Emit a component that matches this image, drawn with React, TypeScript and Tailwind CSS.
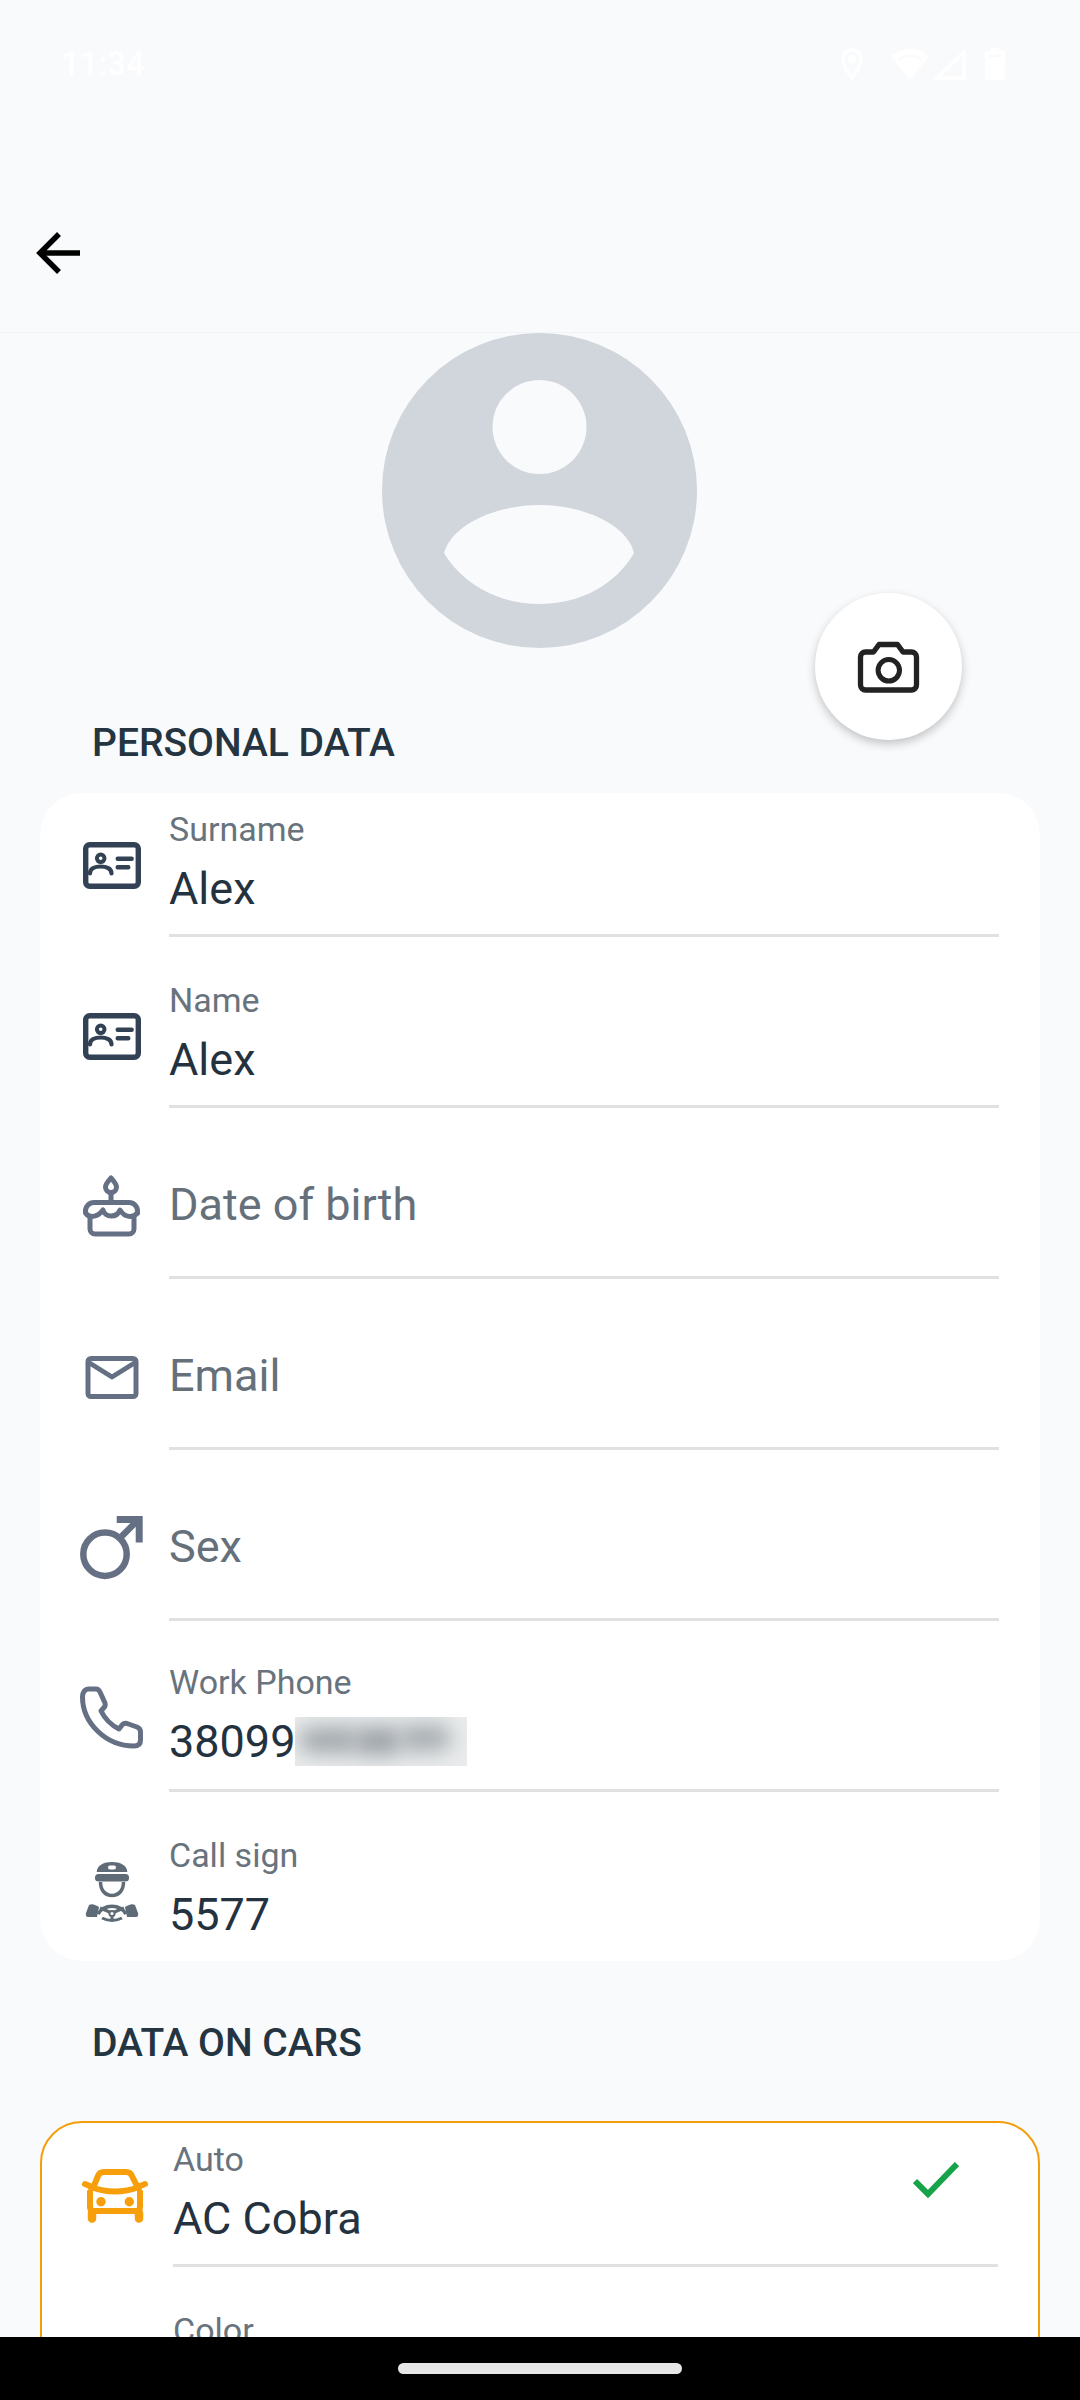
import React from "react";

const Dark = "#334155";
const Muted = "#667085";

function IdCardIcon() {
  return (
    <svg width="80" height="80" viewBox="0 0 80 80" fill="none" stroke={Dark} strokeLinecap="round">
      <g transform="translate(11,17)">
        <rect x="2.7" y="2.7" width="52.6" height="41.6" rx="4" strokeWidth="5.4" />
        <circle cx="17.7" cy="16.3" r="3.8" strokeWidth="4" />
        <path d="M7 31.5 C7 26.5 12 24.5 17.7 24.5 C23.5 24.5 28.5 26.5 28.5 31.5" strokeWidth="4.2" />
        <path d="M34.7 16.7H48.7M34.7 25.3H45.3" strokeWidth="4.4" />
      </g>
    </svg>
  );
}

function CakeIcon() {
  return (
    <svg width="80" height="80" viewBox="0 0 80 80" fill="none" stroke={Muted} strokeWidth="5" strokeLinecap="round" strokeLinejoin="round">
      <path d="M39 11 C42 14.5 44.5 17 44.5 20 A5.5 5.5 0 0 1 33.5 20 C33.5 17 36 14.5 39 11Z" />
      <path d="M39 26V35" />
      <path d="M13.5 44 A8.5 8.5 0 0 1 22 35.5 H57 A8.5 8.5 0 0 1 65.5 44 V46" />
      <path d="M13.5 44 V46 C17 51 25 51 31 43 C33 51 45 51 48 43 C53 51 61 51 65.5 46" />
      <path d="M18 50 V62 A5 5 0 0 0 23 67 H57 A5 5 0 0 0 62 62 V50" />
    </svg>
  );
}

function MailIcon() {
  return (
    <svg width="80" height="80" viewBox="0 0 80 80" fill="none" stroke={Muted} strokeWidth="5" strokeLinejoin="round">
      <rect x="16" y="20.5" width="48" height="38" rx="3" />
      <path d="M16 24 L40 39 L64 24" />
    </svg>
  );
}

function MaleIcon() {
  return (
    <svg width="80" height="80" viewBox="0 0 80 80" fill="none" stroke={Muted} strokeWidth="6.5">
      <circle cx="33" cy="45.2" r="21.7" />
      <path d="M48 29 L66 11" />
      <path d="M44.7 7H70.7V33.5H63.7V14H44.7Z" fill={Muted} stroke="none" />
    </svg>
  );
}

function PhoneIcon() {
  return (
    <svg width="80" height="80" viewBox="0 0 80 80" fill="none" stroke={Muted} strokeWidth="5" strokeLinejoin="round">
      <path d="M10.5 17 C10.5 12 13 9 17 9 H24 C26 9 27 10 28 12 L33 23 C33.5 25 33 26.5 32 27.5 L29 31 C33 39 39 45 47 49 L50 45 C51.5 43.5 53 43 55 43.5 L65 47 C67.5 48 68.5 49.5 68.5 52 V60 C68.5 64 66 66 62 66 C34 66 10.5 43 10.5 17Z" />
    </svg>
  );
}

function DriverIcon() {
  const c = "#5f6b76";
  return (
    <svg width="80" height="80" viewBox="0 0 80 80" fill="none">
      <path d="M24.7 22 C25 15 32 12 40 12 C48 12 55 15 55.3 22Z" fill={c} />
      <rect x="36" y="15.5" width="8" height="4" rx="2" fill="#fff" />
      <rect x="23" y="24" width="34" height="7.5" rx="3.5" fill={c} />
      <path d="M28.5 32 C28.5 40 33 45.5 40 45.5 C47 45.5 51.5 40 51.5 32" stroke={c} strokeWidth="3.5" />
      <path d="M26 64 A16 15 0 0 1 54 64" stroke={c} strokeWidth="3.5" />
      <path d="M28 58 L40 63 L52 58 M40 63V69 M30 68 Q40 73 50 68" stroke={c} strokeWidth="3" />
      <circle cx="40" cy="63.5" r="3.6" fill={c} />
      <circle cx="40" cy="63.5" r="1.6" fill="#fff" />
      <path d="M17 55 C20 53 24 55 27 57 L25 67 H16 C14 67 13.5 65 14 63Z" fill={c} />
      <path d="M63 55 C60 53 56 55 53 57 L55 67 H64 C66 67 66.5 65 66 63Z" fill={c} />
    </svg>
  );
}

function CarIcon() {
  const c = "#f79e0b";
  return (
    <svg width="80" height="80" viewBox="0 0 80 80" fill="none" stroke={c} strokeWidth="6" strokeLinecap="round" strokeLinejoin="round">
      <path d="M17 33 L22 21 C23 18 25 17 28 17 H50 C53 17 55 18 56 21 L62 33" />
      <path d="M15 32 Q39 41 63 32" />
      <path d="M14 37 V52 Q14 56 18 56 H60 Q64 56 64 52 V37" />
      <path d="M9 29 L14 31 M69 29 L64 31" />
      <path d="M16 58V63.5 M63 58V63.5" strokeWidth="8.5" />
      <circle cx="25" cy="46.7" r="4.7" fill={c} stroke="none" />
      <circle cx="53.3" cy="46.7" r="4.7" fill={c} stroke="none" />
    </svg>
  );
}

function BlurBlock() {
  return (
    <div className="relative overflow-hidden w-[172px] h-[49px] mt-[2px] bg-[#e9ebec]">
      <div className="absolute left-[4px] top-[10px] w-[60px] h-[26px] rounded-full bg-[#a2a8ac] blur-[10px]" />
      <div className="absolute left-[58px] top-[10px] w-[50px] h-[28px] rounded-full bg-[#9ca2a7] blur-[10px]" />
      <div className="absolute left-[104px] top-[8px] w-[52px] h-[26px] rounded-full bg-[#a6acb0] blur-[10px]" />
    </div>
  );
}

function Field({
  icon,
  label,
  value,
  placeholder,
  noLine,
  blurred,
  last,
  trailing,
  car,
}: {
  icon: React.ReactNode;
  label?: string;
  value?: string;
  placeholder?: string;
  noLine?: boolean;
  blurred?: boolean;
  last?: boolean;
  trailing?: React.ReactNode;
  car?: boolean;
}) {
  return (
    <div className={`flex items-center ${last ? "h-[142px]" : "h-[144px]"} shrink-0 gap-[17px] ${car ? "pl-[34px] pr-[40px]" : "pl-[32px] pr-[41px]"}`}>
      <div className="w-[80px] h-[80px] shrink-0">{icon}</div>
      <div className={`relative flex-1 h-full ${noLine ? "" : "border-b-[3px] border-[#dfe1e3]"}`}>
        {placeholder ? (
          <div className="pt-[43px] text-[45px] leading-[53px] text-[#65707b]">{placeholder}</div>
        ) : (
          <div className={blurred ? "pt-[14px]" : "pt-[16px]"}>
            <div className="text-[34px] leading-[40px] text-[#68737d]">{label}</div>
            {value !== undefined && (
              <div className="mt-[13px] flex items-start text-[45px] leading-[53px] text-[#243240]">
                <span>{value}</span>
                {blurred && <BlurBlock />}
              </div>
            )}
          </div>
        )}
        {trailing}
      </div>
    </div>
  );
}

export default function App() {
  return (
    <div className="w-[1080px] h-[2400px] flex flex-col overflow-hidden bg-[#f8fafc] [font-family:Roboto,sans-serif]">
      <header className="h-[333px] shrink-0 border-b border-[#f1f3f5]">
        <div className="h-[125px] flex items-start justify-between pl-[61px] pr-[75px] pt-[48px]">
          <span className="text-[33px] leading-[32px] font-medium text-white">11:34</span>
          <div className="flex items-center">
            <svg width="22" height="32" viewBox="0 0 22 32" fill="none" stroke="#fff" strokeWidth="3.5">
              <path d="M11 30 C7 24 2 17 2 11 A9 9 0 0 1 20 11 C20 17 15 24 11 30Z" />
              <circle cx="11" cy="11" r="2.5" fill="#fff" />
            </svg>
            <svg className="ml-[28px]" width="38" height="32" viewBox="0 0 38 32" fill="#fff">
              <path d="M0 9 C10 -2 28 -2 38 9 L19 32Z" />
              <path d="M7 12 C14 6 24 6 31 12" fill="none" stroke="#f8fafc" strokeWidth="2" />
            </svg>
            <svg className="ml-[4px]" width="33" height="32" viewBox="0 0 33 32" fill="none" stroke="#fff" strokeWidth="3.5">
              <path d="M31 4V30H4Z" />
            </svg>
            <svg className="ml-[19px]" width="20" height="32" viewBox="0 0 20 32" fill="#fff">
              <path d="M6 0H14V3H20V32H0V3H6Z" />
              <rect x="3" y="7" width="14" height="2" fill="#f8fafc" />
            </svg>
          </div>
        </div>
        <div className="pl-[35px] pt-[105px]">
          <svg width="46" height="46" viewBox="0 0 46 46" fill="none" stroke="#000" strokeWidth="5.5">
            <path d="M24 4 L5 23 L24 42" />
            <path d="M5 23H45" />
          </svg>
        </div>
      </header>

      <main className="relative flex-1 min-h-0 overflow-hidden">
        <section className="relative">
          <div className="flex justify-center pr-[2px]">
            <svg width="315" height="315" viewBox="0 0 315 315">
              <circle cx="157.5" cy="157.5" r="157.5" fill="#d1d5dc" />
              <circle cx="157.5" cy="94" r="47" fill="#f8fafc" />
              <path d="M62 220 C70 191 115 172 157.5 172 C200 172 245 191 252 220 C235 250 200 271 157.5 271 C115 271 80 250 62 220Z" fill="#f8fafc" />
            </svg>
          </div>
          <h2 className="ml-[92px] mt-[73px] mb-[28px] text-[39px] leading-[44px] font-medium text-[#243441]">PERSONAL DATA</h2>
          <button className="absolute left-[815px] top-[260px] w-[147px] h-[147px] rounded-full bg-white flex items-center justify-center shadow-[0_4px_10px_rgba(0,0,0,0.22)]">
            <svg width="100" height="80" viewBox="-1.5 1 100 80" fill="none" stroke="#222" strokeLinejoin="round">
              <path d="M20 31 A5 5 0 0 1 25 26 H33 L38.5 18.5 H57 L62.5 26 H71 A5 5 0 0 1 76 31 V59 A5 5 0 0 1 71 64 H25 A5 5 0 0 1 20 59Z" strokeWidth="5.3" />
              <circle cx="48.3" cy="44.3" r="10.7" strokeWidth="5" />
            </svg>
          </button>
        </section>

        <section className="mx-[40px] rounded-[42px] bg-white flex flex-col gap-[27px]">
          <Field icon={<IdCardIcon />} label="Surname" value="Alex" />
          <Field icon={<IdCardIcon />} label="Name" value="Alex" />
          <Field icon={<CakeIcon />} placeholder="Date of birth" />
          <Field icon={<MailIcon />} placeholder="Email" />
          <Field icon={<MaleIcon />} placeholder="Sex" />
          <Field icon={<PhoneIcon />} label="Work Phone" value="38099" blurred />
          <Field icon={<DriverIcon />} label="Call sign" value="5577" noLine last />
        </section>

        <h2 className="ml-[92px] mt-[60px] text-[39px] leading-[44px] font-medium text-[#243441]">DATA ON CARS</h2>

        <section className="mx-[40px] mt-[56px] rounded-[42px] bg-white border-[2.5px] border-[#f59e0b] flex flex-col gap-[27px]">
          <Field
            car
            icon={<CarIcon />}
            label="Auto"
            value="AC Cobra"
            trailing={
              <svg className="absolute right-[39px] top-[39px]" width="46" height="36" viewBox="0 0 46 36" fill="none" stroke="#16a34a" strokeWidth="6">
                <path d="M2 19 L15 32 L44 2" />
              </svg>
            }
          />
          <Field car icon={<div />} label="Color" value="" />
        </section>
      </main>

      <nav className="h-[63px] shrink-0 bg-black flex items-start justify-center pt-[26px]">
        <div className="w-[284px] h-[11px] rounded-full bg-[#e6e6e6]" />
      </nav>
    </div>
  );
}
